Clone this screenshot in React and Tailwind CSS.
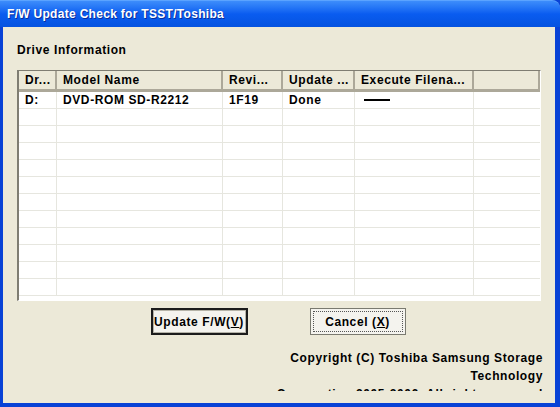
import React from 'react';

const cols = [
  { label: 'Dr...', w: 'w-[38px]' },
  { label: 'Model Name', w: 'w-[166px]' },
  { label: 'Revi...', w: 'w-[60px]' },
  { label: 'Update ...', w: 'w-[72px]' },
  { label: 'Execute Filena...', w: 'w-[119px]' },
  { label: '', w: 'flex-1' },
];

const rows = Array.from({ length: 12 });

export default function App() {
  return (
    <div className="w-[560px] h-[407px] flex flex-col overflow-hidden bg-[#0842d6] font-['Liberation_Sans',Arial,sans-serif] font-bold text-[12px] tracking-[0.6px] text-black">
      {/* title bar */}
      <div className="h-[27px] shrink-0 flex items-center pl-[7px] rounded-tr-[8px] bg-gradient-to-b from-[#3d8dfb] via-[#0a5cf0] to-[#0553e0] border-t border-[#5ba3ff]">
        <span className="text-white text-[12px] tracking-[0.3px] [text-shadow:1px_1px_0_#0a2e9a]">F/W Update Check for TSST/Toshiba</span>
      </div>

      {/* body */}
      <div className="flex-1 ml-[3px] mr-[5px] mb-[4px] bg-[#ece9d8] flex flex-col">
        <div className="pl-[14px] pt-[15px] h-[43px] leading-[16px]">Drive Information</div>

        {/* list */}
        <div className="ml-[14px] w-[524px] h-[231px] border-l-2 border-t border-[#7f7d72] border-r border-b border-r-white border-b-white bg-white flex flex-col overflow-hidden">
          <div className="h-[21px] flex bg-[#ece9d8] border-b-[3px] border-[#aca899]">
            {cols.map((c, i) => (
              <div
                key={i}
                className={`${c.w} h-full flex items-center pl-[6px] border-r-2 border-[#aca899] whitespace-nowrap overflow-hidden ${i === 5 ? 'border-r-0' : ''}`}
              >
                {c.label}
              </div>
            ))}
          </div>
          <div className="flex-1 flex flex-col">
            {rows.map((_, r) => (
              <div key={r} className="h-[17px] shrink-0 flex border-b border-[#e6e6df]">
                {cols.map((c, i) => (
                  <div
                    key={i}
                    className={`${c.w} h-full flex items-center pl-[6px] border-r border-[#e6e6df] whitespace-nowrap ${i === 5 ? 'border-r-0' : ''}`}
                  >
                    {r === 0 && i === 0 && 'D:'}
                    {r === 0 && i === 1 && 'DVD-ROM SD-R2212'}
                    {r === 0 && i === 2 && '1F19'}
                    {r === 0 && i === 3 && 'Done'}
                    {r === 0 && i === 4 && <span className="block ml-[3px] w-[26px] h-[2px] bg-black" />}
                  </div>
                ))}
              </div>
            ))}
          </div>
        </div>

        {/* buttons */}
        <div className="flex justify-center gap-[62px] mt-[7px] pr-[2px]">
          <button className="w-[97px] h-[27px] border-2 border-[#1c1c1c] bg-[#f4f3ee] flex items-center justify-center text-[12px] font-bold tracking-[0.6px]">
            <span className="border border-[#b5b3a8] w-full h-full flex items-center justify-center">
              Update F/W(<u>V</u>)
            </span>
          </button>
          <button className="w-[96px] h-[27px] border border-[#7a7a70] bg-[#f4f3ee] flex items-center justify-center p-[2px] text-[12px] font-bold tracking-[0.6px]">
            <span className="border border-dotted border-[#555] w-full h-full flex items-center justify-center">
              Cancel (<u>X</u>)
            </span>
          </button>
        </div>

        {/* copyright: last line is cut off by the window, as in the original */}
        <div className="mt-[14px] h-[42px] overflow-hidden pr-[12px] text-right leading-[18px]">
          <div>Copyright (C) Toshiba Samsung Storage</div>
          <div>Technology</div>
          <div>Corporation 2005-2006. All rights reserved</div>
        </div>
      </div>
    </div>
  );
}
